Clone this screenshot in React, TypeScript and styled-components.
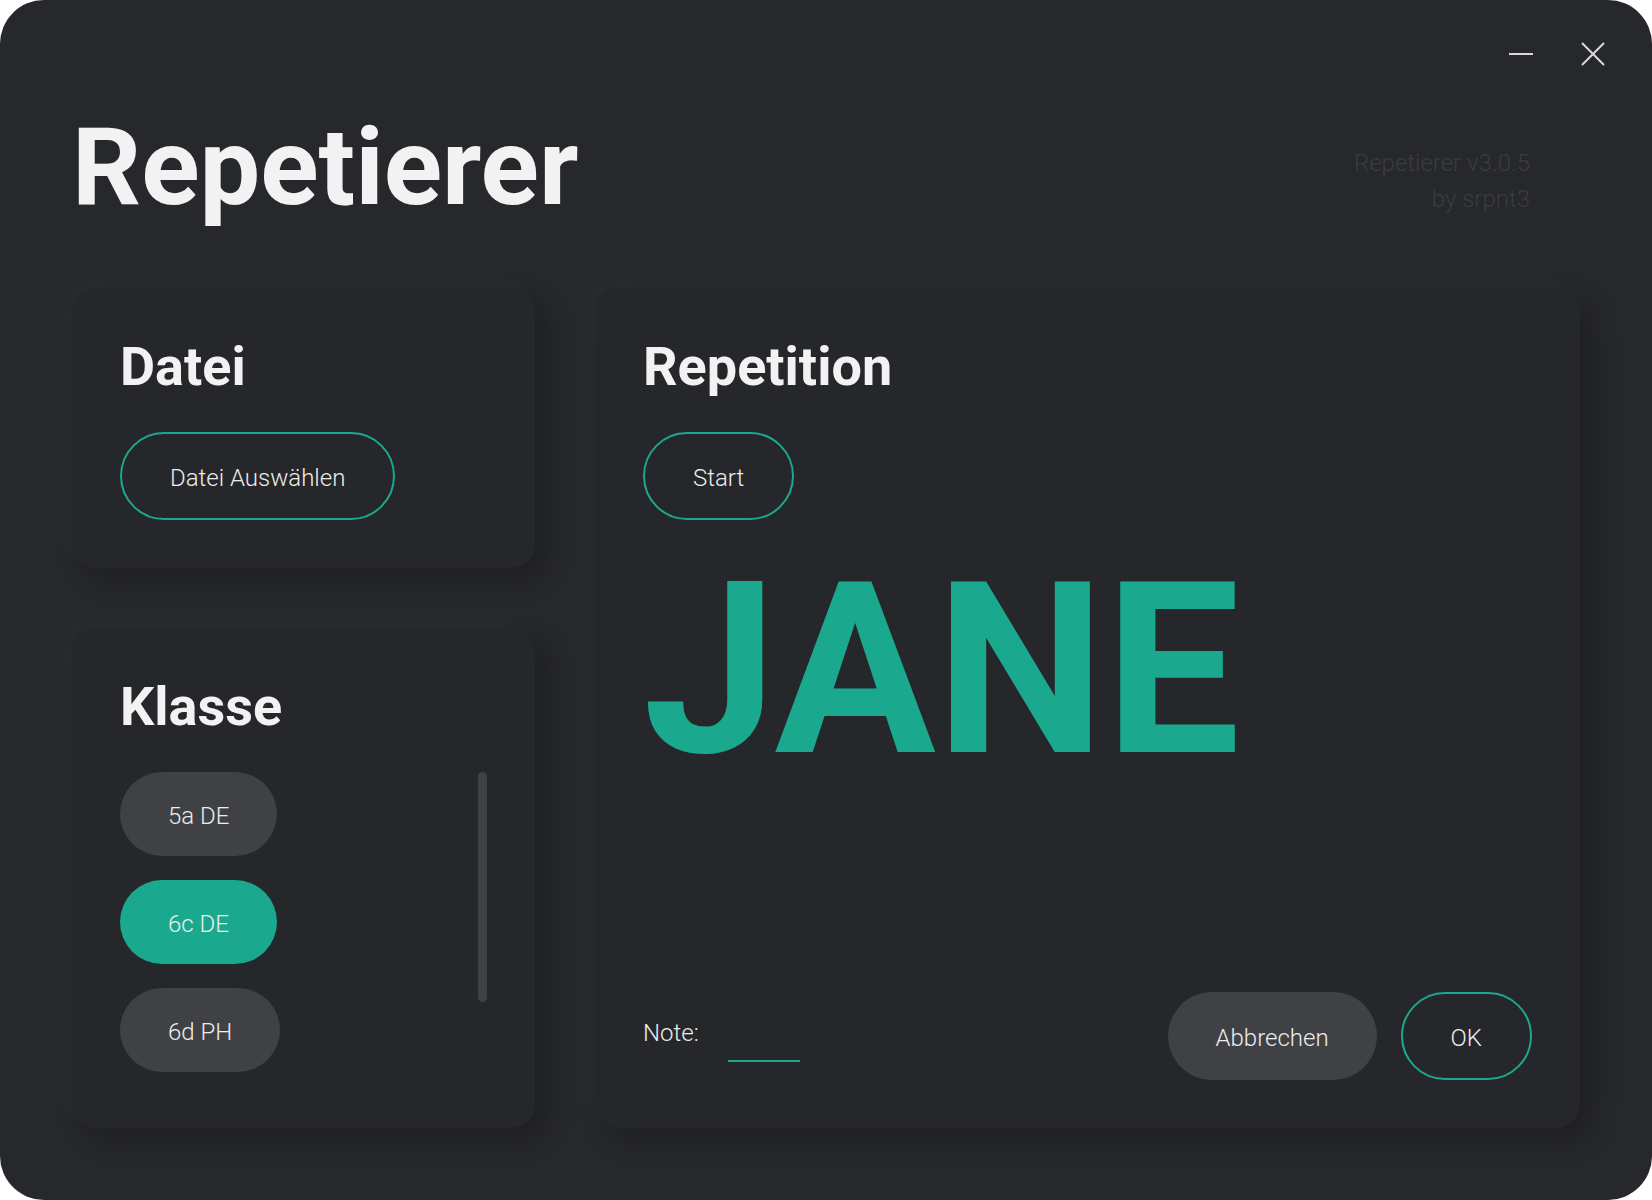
import React from "react";
import styled, { createGlobalStyle } from "styled-components";

const TEAL = "#1aa98f";
const FONT = `Roboto, "Liberation Sans", "Noto Sans", sans-serif`;

const GlobalStyle = createGlobalStyle`
  html, body { margin: 0; padding: 0; background: #ffffff; }
  body { font-family: ${FONT}; }
  * { box-sizing: border-box; }
`;

const Window = styled.div`
  width: 1652px;
  height: 1200px;
  background: #27282c;
  border-radius: 44px;
  overflow: hidden;
  display: flex;
  flex-direction: column;
  font-family: ${FONT};
  color: #ececec;
`;

const TopBar = styled.div`
  display: flex;
  justify-content: flex-end;
  gap: 48px;
  padding: 42px 47px 0 0;
`;

const WinButton = styled.button`
  width: 24px;
  height: 24px;
  padding: 0;
  border: 0;
  background: none;
  color: #d9d9d9;
  display: flex;
  cursor: pointer;
  svg { display: block; }
`;

const Header = styled.header`
  display: flex;
  justify-content: space-between;
  align-items: flex-start;
  margin-top: 47px;
  padding: 0 122px 0 72px;
`;

const AppTitle = styled.h1`
  margin: 0;
  font-size: 108px;
  line-height: 108px;
  font-weight: 700;
  color: #f2f2f2;
`;

const VersionInfo = styled.div`
  margin-top: 32px;
  text-align: right;
  font-size: 24px;
  line-height: 36px;
  font-weight: 300;
  color: #3b3c41;
`;

const Main = styled.main`
  flex: 1;
  min-height: 0;
  display: grid;
  grid-template-columns: 463px 1fr;
  gap: 60px;
  margin-top: 67px;
  padding: 0 72px 72px 72px;
`;

const Column = styled.div`
  display: flex;
  flex-direction: column;
  gap: 60px;
  min-height: 0;
`;

const Card = styled.section<{ $grow?: boolean }>`
  display: flex;
  flex-direction: column;
  align-items: flex-start;
  flex: ${(p) => (p.$grow ? "1" : "none")};
  min-height: 0;
  padding: 52px 48px 48px 48px;
  background: #26272b;
  border-radius: 24px;
  box-shadow: -10px -10px 24px rgba(255, 255, 255, 0.025),
    12px 12px 26px rgba(0, 0, 0, 0.22);
`;

const CardTitle = styled.h2`
  margin: 0 0 38px 0;
  font-size: 54px;
  line-height: 54px;
  font-weight: 700;
  color: #f2f2f2;
`;

const ActionButton = styled.button<{ $variant: "outline" | "filled" }>`
  height: 88px;
  padding: 3px 48px 0 48px;
  border-radius: 44px;
  border: ${(p) => (p.$variant === "outline" ? `2px solid ${TEAL}` : "0")};
  background: ${(p) => (p.$variant === "outline" ? "transparent" : "#404145")};
  color: #ececec;
  font-family: ${FONT};
  font-size: 24px;
  font-weight: 300;
  line-height: 28px;
  white-space: nowrap;
  cursor: pointer;
  box-sizing: ${(p) => (p.$variant === "outline" ? "content-box" : "border-box")};
  height: ${(p) => (p.$variant === "outline" ? "81px" : "88px")};
`;

const ClassList = styled.div`
  flex: 1;
  min-height: 0;
  align-self: stretch;
  display: flex;
  justify-content: space-between;
  align-items: flex-start;
`;

const ClassItems = styled.div`
  display: flex;
  flex-direction: column;
  align-items: flex-start;
  gap: 24px;
  overflow: hidden;
`;

const ClassPill = styled.button<{ $active?: boolean }>`
  height: 84px;
  padding: 3px 48px 0 48px;
  border: 0;
  border-radius: 42px;
  background: ${(p) => (p.$active ? TEAL : "#404145")};
  color: #ececec;
  font-family: ${FONT};
  font-size: 24px;
  font-weight: 300;
  line-height: 28px;
  cursor: pointer;
`;

const ScrollThumb = styled.div`
  width: 9px;
  height: 230px;
  border-radius: 5px;
  background: #404145;
`;

const BigName = styled.div`
  margin-top: 30px;
  font-size: 240px;
  line-height: 240px;
  font-weight: 700;
  color: ${TEAL};
`;

const BottomRow = styled.div`
  margin-top: auto;
  align-self: stretch;
  display: flex;
  align-items: center;
  justify-content: space-between;
`;

const NoteGroup = styled.label`
  display: flex;
  align-items: flex-start;
  gap: 29px;
  margin-top: 8px;
`;

const NoteLabel = styled.span`
  font-size: 24px;
  line-height: 28px;
  font-weight: 300;
  color: #ececec;
`;

const NoteInput = styled.input`
  width: 72px;
  height: 43px;
  padding: 0;
  border: 0;
  border-bottom: 2px solid ${TEAL};
  background: transparent;
  color: #ececec;
  font-family: ${FONT};
  font-size: 24px;
  outline: none;
`;

const ButtonGroup = styled.div`
  display: flex;
  align-items: center;
  gap: 24px;
`;

export default function App() {
  return (
    <>
      <GlobalStyle />
      <Window>
        <TopBar>
          <WinButton aria-label="Minimieren">
            <svg width="24" height="24" viewBox="0 0 24 24">
              <line x1="0" y1="12" x2="24" y2="12" stroke="currentColor" strokeWidth="2" />
            </svg>
          </WinButton>
          <WinButton aria-label="Schließen">
            <svg width="24" height="24" viewBox="0 0 24 24">
              <line x1="1" y1="1" x2="23" y2="23" stroke="currentColor" strokeWidth="2" />
              <line x1="23" y1="1" x2="1" y2="23" stroke="currentColor" strokeWidth="2" />
            </svg>
          </WinButton>
        </TopBar>
        <Header>
          <AppTitle>Repetierer</AppTitle>
          <VersionInfo>
            Repetierer v3.0.5
            <br />
            by srpnt3
          </VersionInfo>
        </Header>
        <Main>
          <Column>
            <Card>
              <CardTitle>Datei</CardTitle>
              <ActionButton $variant="outline">Datei Auswählen</ActionButton>
            </Card>
            <Card $grow>
              <CardTitle>Klasse</CardTitle>
              <ClassList>
                <ClassItems>
                  <ClassPill>5a DE</ClassPill>
                  <ClassPill $active>6c DE</ClassPill>
                  <ClassPill>6d PH</ClassPill>
                </ClassItems>
                <ScrollThumb />
              </ClassList>
            </Card>
          </Column>
          <Card>
            <CardTitle>Repetition</CardTitle>
            <ActionButton $variant="outline">Start</ActionButton>
            <BigName>JANE</BigName>
            <BottomRow>
              <NoteGroup>
                <NoteLabel>Note:</NoteLabel>
                <NoteInput type="text" defaultValue="" />
              </NoteGroup>
              <ButtonGroup>
                <ActionButton $variant="filled">Abbrechen</ActionButton>
                <ActionButton $variant="outline">OK</ActionButton>
              </ButtonGroup>
            </BottomRow>
          </Card>
        </Main>
      </Window>
    </>
  );
}
